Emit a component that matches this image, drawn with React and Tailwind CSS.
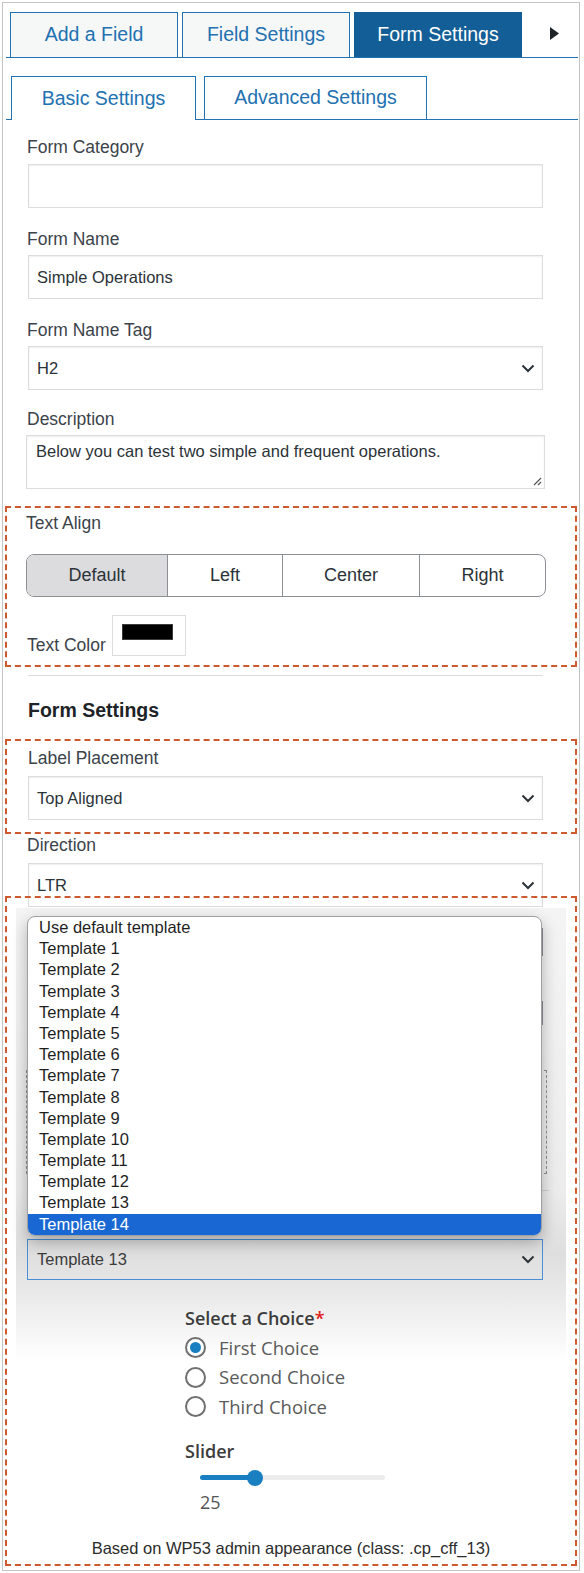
import React from "react";

const Chevron = () => (
  <svg width="14" height="9" viewBox="0 0 14 9" className="shrink-0">
    <path d="M1.5 1.5l5.5 5.5 5.5-5.5" fill="none" stroke="#2c3338" strokeWidth="2" />
  </svg>
);

const Label = ({ children, className = "" }) => (
  <div className={`text-[17.5px] leading-[22px] text-[#3c434a] ${className}`}>{children}</div>
);

const Field = ({ value, h = "h-[44px]", className = "" }) => (
  <div
    className={`${h} flex items-center border border-[#dcdcde] bg-white pl-[8px] text-[16.5px] text-[#2c3338] shadow-[inset_0_1px_2px_rgba(0,0,0,0.07)] ${className}`}
  >
    {value}
  </div>
);

const Select = ({ value, className = "" }) => (
  <div
    className={`h-[44px] flex items-center justify-between border border-[#dcdcde] bg-white pl-[8px] pr-[7px] text-[16.5px] text-[#2c3338] shadow-[inset_0_1px_2px_rgba(0,0,0,0.07)] ${className}`}
  >
    <span>{value}</span>
    <Chevron />
  </div>
);

const templates = [
  "Use default template",
  "Template 1",
  "Template 2",
  "Template 3",
  "Template 4",
  "Template 5",
  "Template 6",
  "Template 7",
  "Template 8",
  "Template 9",
  "Template 10",
  "Template 11",
  "Template 12",
  "Template 13",
  "Template 14",
];

const Radio = ({ checked, label }) => (
  <div className="flex items-center h-[29.5px] gap-[13px]">
    <span className="w-[21px] h-[21px] rounded-full border-2 border-[#707070] bg-white flex items-center justify-center">
      {checked && <span className="w-[11px] h-[11px] rounded-full bg-[#1a7fc1]" />}
    </span>
    <span className="text-[18.5px] text-[#5a5a5a]">{label}</span>
  </div>
);

export default function App() {
  return (
    <div className="bg-white min-h-[1573px] pt-[2px] pl-[2px] [font-family:'Liberation_Sans',Arial,sans-serif]">
      <div className="w-[578px] h-[1569px] border border-[#c3c4c7] overflow-hidden">
        {/* main tabs */}
        <div className="ml-[3px] mr-[1px] pt-[9px] flex items-end pl-[4px] gap-[4px] border-b border-[#2271b1]">
          <div className="w-[168px] h-[45px] flex items-center justify-center bg-[#f6f7f7] border border-b-0 border-[#2271b1] text-[19.5px] text-[#2271b1]">
            Add a Field
          </div>
          <div className="w-[168px] h-[45px] flex items-center justify-center bg-[#f6f7f7] border border-b-0 border-[#2271b1] text-[19.5px] text-[#2271b1]">
            Field Settings
          </div>
          <div className="w-[168px] h-[45px] flex items-center justify-center bg-[#135e96] border border-b-0 border-[#135e96] text-[19.5px] text-white">
            Form Settings
          </div>
          <div className="h-[45px] flex items-start pt-[15px] pl-[24px]">
            <svg width="9" height="13" viewBox="0 0 9 13">
              <path d="M0 0l9 6.5L0 13z" fill="#1d2327" />
            </svg>
          </div>
        </div>

        {/* sub tabs */}
        <div className="ml-[3px] mr-[1px] pt-[18px] flex items-end pl-[5px] gap-[8px] border-b border-[#2271b1]">
          <div className="w-[185px] h-[44px] -mb-px flex items-center justify-center bg-white border border-b-0 border-[#2271b1] text-[19.5px] text-[#2271b1]">
            Basic Settings
          </div>
          <div className="w-[223px] h-[43px] flex items-center justify-center bg-white border border-b-0 border-[#2271b1] text-[19.5px] text-[#2271b1]">
            Advanced Settings
          </div>
        </div>

        {/* settings body */}
        <div className="pl-[25px] pr-[36px] pt-[16px]">
          <Label className="-ml-px">Form Category</Label>
          <Field value="" className="mt-[6px]" />

          <Label className="mt-[20px] -ml-px">Form Name</Label>
          <Field value="Simple Operations" className="mt-[5px] h-[43px]" />

          <Label className="mt-[20px] -ml-px">Form Name Tag</Label>
          <Select value="H2" className="mt-[5px] h-[43px]" />

          <Label className="mt-[18px] -ml-px">Description</Label>
          <div className="relative mt-[5px] -ml-[2px] -mr-[2px] h-[54px] border border-[#dcdcde] bg-white pl-[9px] pt-[3px] text-[16.5px] text-[#2c3338] shadow-[inset_0_1px_2px_rgba(0,0,0,0.07)]">
            Below you can test two simple and frequent operations.
            <svg width="10" height="10" viewBox="0 0 10 10" className="absolute right-[2px] bottom-[2px]">
              <path d="M9 2L2 9M9 6L6 9" stroke="#555" strokeWidth="1.2" />
            </svg>
          </div>

          {/* text align box */}
          <div className="mt-[17px] -ml-[23px] -mr-[34px] border-2 border-dashed border-[#cc5a2e] pl-[19px] pr-[29px] pt-[4px] pb-[9px]">
            <Label>Text Align</Label>
            <div className="mt-[20px] h-[43px] grid grid-cols-[140px_115px_137px_1fr] border border-[#8c8f94] rounded-[8px] overflow-hidden text-[18px] text-[#2c3338]">
              <div className="flex items-center justify-center bg-[#dcdcde]">Default</div>
              <div className="flex items-center justify-center border-l border-[#8c8f94]">Left</div>
              <div className="flex items-center justify-center border-l border-[#8c8f94]">Center</div>
              <div className="flex items-center justify-center border-l border-[#8c8f94]">Right</div>
            </div>
            <div className="mt-[18px] flex items-end gap-[6px]">
              <Label className="pl-px">Text Color</Label>
              <div className="w-[74px] h-[41px] border border-[#dcdcde] flex items-center justify-center pb-[8px] pr-[2px]">
                <div className="w-[51px] h-[16px] bg-black border border-[#3c3c3c]" />
              </div>
            </div>
          </div>

          <div className="mt-[8px] h-px bg-[#dcdcde]" />

          <div className="mt-[22px] text-[19.5px] leading-[24px] font-bold text-[#1d2327]">Form Settings</div>

          {/* label placement box */}
          <div className="mt-[17px] -ml-[23px] -mr-[34px] border-2 border-dashed border-[#cc5a2e] pl-[21px] pr-[32px] pt-[6px] pb-[12px]">
            <Label>Label Placement</Label>
            <Select value="Top Aligned" className="mt-[7px] h-[43px]" />
          </div>

          <Label className="-ml-px">Direction</Label>
          <Select value="LTR" className="mt-[7px] h-[43px]" />

          {/* template box */}
          <div className="relative -mt-[11px] -ml-[23px] -mr-[34px] border-2 border-dashed border-[#cc5a2e] px-[9px] pt-[10px] pb-[2px]">
            <div className="relative bg-[linear-gradient(to_bottom,#f4f4f4_0%,#ececec_45%,#dedede_55%,#ebebeb_62%,#ffffff_72%,#ffffff_100%)] pl-[11px] pr-[23px] pb-[26px]">
              {/* content hidden under the open list */}
              <div className="h-[331px] pt-[20px]">
                <div className="h-[28px] border border-[#8c8f94] bg-white" />
                <div className="mt-[17px] w-[3px] h-[16px] bg-[#50575e]" />
                <div className="mt-[12px] h-[24px] border border-[#8c8f94] bg-white" />
                <div className="mt-[16px] w-[3px] h-[14px] bg-[#50575e]" />
                <div className="mt-[15px] h-[104px] -ml-px -mr-[4px] border border-dashed border-[#8c8f94]" />
                <div className="mt-[16px] h-px -mr-[6px] bg-[#cfcfcf]" />
                <div className="mt-[21px] w-[3px] h-[14px] bg-[#50575e]" />
              </div>

              {/* open dropdown list */}
              <div className="absolute left-[11px] top-[8px] w-[515px] rounded-[8px] border border-[#a0a0a0] bg-white overflow-hidden shadow-[0_6px_16px_rgba(0,0,0,0.28)]">
                {templates.map((t) => (
                  <div
                    key={t}
                    className={`h-[21.2px] leading-[21.2px] pl-[11px] text-[16.5px] ${
                      t === "Template 14" ? "bg-[#1967d2] text-white" : "text-[#1f1f1f]"
                    }`}
                  >
                    {t}
                  </div>
                ))}
              </div>

              <div className="h-[41px] flex items-center justify-between border border-[#4a8fd4] bg-[linear-gradient(to_bottom,#dddddd,#e4e4e4)] pl-[9px] pr-[7px] text-[16.5px] text-[#3c3c3c]">
                <span>Template 13</span>
                <Chevron />
              </div>

              {/* preview */}
              <div className="pl-[158px] pt-[27px] [font-family:'Open_Sans','Noto_Sans',sans-serif]">
                <div className="text-[18px] leading-[22px] font-semibold text-[#3c3c3c]">
                  Select a Choice<span className="text-[#e02020]">*</span>
                </div>
                <div className="mt-[4px]">
                  <Radio checked label="First Choice" />
                  <Radio label="Second Choice" />
                  <Radio label="Third Choice" />
                </div>
                <div className="mt-[18px] text-[18px] leading-[22px] font-semibold text-[#3c3c3c]">Slider</div>
                <div className="mt-[8px] ml-[15px] w-[185px] h-[16px] flex items-center">
                  <div className="w-[55px] h-[5px] rounded-l-full bg-[#1a7fc1]" />
                  <div className="w-[16px] h-[16px] -mx-[8px] rounded-full bg-[#1a7fc1] relative" />
                  <div className="flex-1 h-[5px] rounded-r-full bg-[#ececec]" />
                </div>
                <div className="mt-[6px] ml-[15px] text-[18px] leading-[20px] text-[#555]">25</div>
              </div>
            </div>
            <div className="text-center text-[16.5px] leading-[20px] text-[#2c2c2c] pb-[4px]">
              Based on WP53 admin appearance (class: .cp_cff_13)
            </div>
          </div>
        </div>
      </div>
    </div>
  );
}
